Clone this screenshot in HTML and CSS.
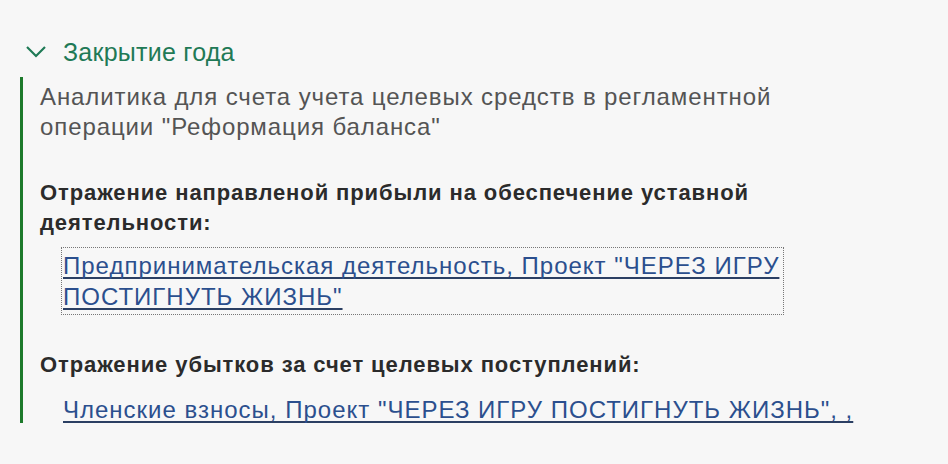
FILE: index.html
```html
<!DOCTYPE html>
<html lang="ru">
<head>
<meta charset="utf-8">
<link rel="stylesheet" href="styles.css">
</head>
<body>
<div class="group">
  <div class="group-header">
    <svg class="chevron" width="22" height="14" viewBox="0 0 22 14"><path d="M2 2 L11 11 L20 2" fill="none" stroke="#1f7a56" stroke-width="2.2"/></svg>
    <span class="group-title">Закрытие года</span>
  </div>
  <div class="group-body">
    <p class="desc">Аналитика для счета учета целевых средств в регламентной операции "Реформация баланса"</p>
    <div class="field">
      <div class="label">Отражение направленой прибыли на обеспечение уставной деятельности:</div>
      <div class="value focused"><a href="#" class="link">Предпринимательская деятельность, Проект "ЧЕРЕЗ ИГРУ ПОСТИГНУТЬ ЖИЗНЬ"</a></div>
    </div>
    <div class="field">
      <div class="label">Отражение убытков за счет целевых поступлений:</div>
      <div class="value"><a href="#" class="link">Членские взносы, Проект "ЧЕРЕЗ ИГРУ ПОСТИГНУТЬ ЖИЗНЬ", ,</a></div>
    </div>
  </div>
</div>
</body>
</html>
```
FILE: styles.css
```css
html, body {
  margin: 0;
  padding: 0;
}
body {
  background: #f7f7f7;
  font-family: "Liberation Sans", Arial, sans-serif;
  width: 948px;
  height: 464px;
  overflow: hidden;
}
.group {
  padding: 38px 0 0 20px;
}
.group-header {
  display: flex;
  align-items: center;
  height: 28px;
  padding-left: 5px;
}
.chevron {
  display: block;
  margin-right: 16px;
}
.group-title {
  font-size: 25px;
  letter-spacing: 0.25px;
  color: #1f7a56;
  line-height: 28px;
}
.group-body {
  margin-top: 11px;
  border-left: 3px solid #1d7a2b;
  padding: 5px 0 0 17px;
  height: 346px;
  box-sizing: border-box;
}
.desc {
  margin: 0;
  font-size: 24px;
  letter-spacing: 0.9px;
  line-height: 30px;
  color: #545454;
  width: 780px;
}
.field {
  margin-top: 36px;
}
.field + .field {
  margin-top: 35px;
}
.label {
  font-size: 22px;
  letter-spacing: 0.9px;
  font-weight: bold;
  line-height: 30px;
  color: #2b2b2b;
  width: 760px;
}
.value {
  margin: 9px 0 0 21px;
  padding: 2px 0 2px 1px;
  border: 1px dotted transparent;
  width: 720px;
  font-size: 24px;
  letter-spacing: 1px;
  line-height: 31px;
}
.value.focused {
  border-color: #777777;
}
.field + .field .value {
  margin-top: 11px;
  width: auto;
}
.link {
  color: #2b4f8e;
  text-decoration: underline;
  text-decoration-color: #2b3f63;
  text-decoration-thickness: 2px;
  text-decoration-skip-ink: none;
  text-underline-offset: 3px;
}
```
